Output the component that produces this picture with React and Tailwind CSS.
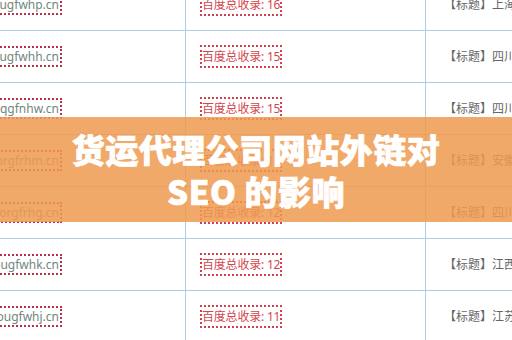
import React from 'react';

const rows = [
  { domain: 'pougfwhp.cn', count: 16, region: '上海' },
  { domain: 'bougfwhh.cn', count: 15, region: '四川' },
  { domain: 'oqgfnhw.cn', count: 15, region: '四川' },
  { domain: 'oorgfrhm.cn', count: 11, region: '安徽' },
  { domain: 'oorgfrhg.cn', count: 12, region: '四川' },
  { domain: 'bougfwhk.cn', count: 12, region: '江西' },
  { domain: 'bougfwhj.cn', count: 11, region: '江苏' },
];

const App = () => {
  return (
    <div className="relative w-[512px] h-[340px] overflow-hidden bg-white" style={{ fontFamily: '"Noto Sans", "Noto Sans CJK SC", sans-serif' }}>
      {/* TABLE */}
      <div className="flex flex-col mt-[-21px]">
        {rows.map((row, i) => (
          <div key={i} className="flex h-[52px] border-b border-[#aacfe8] shrink-0">
            <div className="w-[62px] flex items-center justify-end overflow-hidden shrink-0">
              <span className="shrink-0 whitespace-nowrap border-2 border-dotted border-[#b8304c] pl-1 pr-[1px] text-[12px] leading-[17px] text-[#72867d]">
                {row.domain}
              </span>
            </div>
            <div className="w-[124px] border-r border-[#aacfe8] shrink-0" />
            <div className="w-[240px] flex items-center pl-[14px] border-r border-[#aacfe8] shrink-0">
              <span className="whitespace-nowrap border-2 border-dotted border-[#d0404e] text-[12px] leading-[19px] tracking-[-0.2px] text-[#d4464e]">
                百度总收录: {row.count}
              </span>
            </div>
            <div className="flex items-center pl-[18px] shrink-0 whitespace-nowrap text-[12px] text-[#666666]">
              【标题】{row.region}货运代理有限公司
            </div>
          </div>
        ))}
      </div>

      {/* BANNER */}
      <div className="absolute left-0 right-0 top-[117px] h-[105px] flex items-center justify-center bg-[#ee9a50]/[0.85]">
        <h1
          className="text-center text-white text-[33px] leading-[42px] font-black tracking-[0.5px] [-webkit-text-stroke:0.7px_#ffffff]"
          style={{ fontFamily: '"Noto Sans CJK SC", "Noto Sans", sans-serif' }}
        >
          货运代理公司网站外链对
          <br />
          SEO 的影响
        </h1>
      </div>
    </div>
  );
};

export default App;
